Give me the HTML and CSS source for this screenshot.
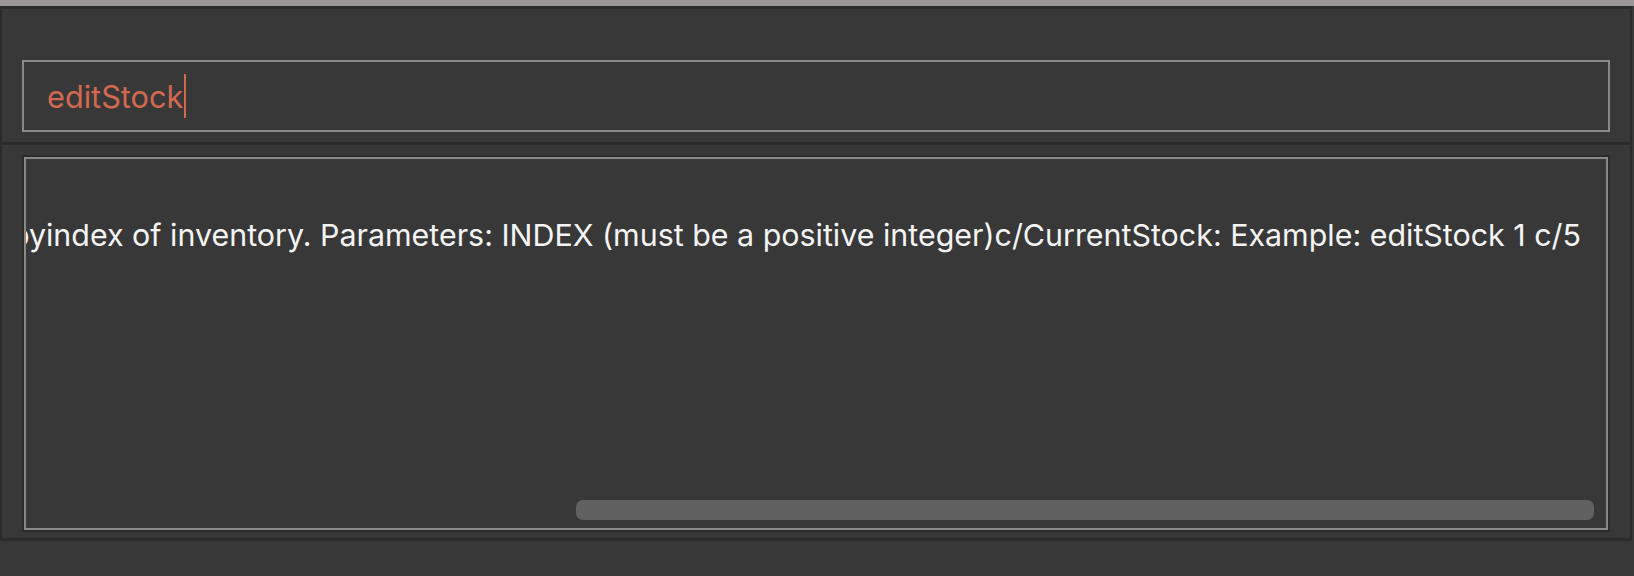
FILE: index.html
```html
<!DOCTYPE html>
<html lang="en">
<head>
<meta charset="utf-8">
<title>editStock</title>
<link rel="stylesheet" href="styles.css">
</head>
<body>
<div class="topbar"></div>
<main class="app">
  <section class="panel cmd-panel">
    <div class="cmd-box">
      <span class="cmd-text">editStock</span><span class="caret"></span>
    </div>
  </section>
  <section class="panel result-panel">
    <div class="result-box">
      <div class="result-inner">
        <div class="result-scroll">
          <span class="result-text">Edits the current stock of the item identified byindex of inventory. Parameters: INDEX (must be a positive integer)c/CurrentStock: Example: editStock 1 c/5</span>
        </div>
        <div class="hscroll-thumb"></div>
      </div>
    </div>
  </section>
</main>
</body>
</html>
```
FILE: styles.css
```css
html, body {
  margin: 0;
  padding: 0;
}
body {
  width: 1634px;
  height: 576px;
  overflow: hidden;
  background: #383838;
  font-family: "Inter", "Noto Sans", sans-serif;
}
.topbar {
  height: 6px;
  background: #9b9697;
}
.app {
  width: 1632px;
  display: flex;
  flex-direction: column;
  border-top: 3px solid #2b2b2b;
}
.panel {
  border-left: 2px solid #2b2b2b;
  border-right: 2px solid #2b2b2b;
  background: #383838;
}
.cmd-panel {
  height: 133px;
  box-sizing: border-box;
  padding: 51px 20px 0 20px;
}
.cmd-box {
  height: 72px;
  box-sizing: border-box;
  border: 2px solid #8a8a8a;
  display: flex;
  align-items: center;
  padding-left: 23px;
}
.cmd-text {
  font-size: 30.7px;
  line-height: 36px;
  color: #d2694f;
  padding-top: 2px;
}
.caret {
  display: inline-block;
  width: 2px;
  height: 44px;
  margin-left: 1px;
  background: #d2694f;
}
.result-panel {
  border-top: 3px solid #2b2b2b;
  border-bottom: 3px solid #2b2b2b;
  height: 399px;
  box-sizing: border-box;
  padding: 10px 20px 9px 20px;
}
.result-box {
  height: 377px;
  box-sizing: border-box;
  border: 2px solid #2b2b2b;
}
.result-inner {
  position: relative;
  height: 100%;
  box-sizing: border-box;
  border: 2px solid #8a8a8a;
}
.result-scroll {
  display: flex;
  justify-content: flex-end;
  overflow: hidden;
  padding: 58px 25px 0 0;
}
.result-text {
  flex: none;
  white-space: nowrap;
  font-size: 30.4px;
  line-height: 36px;
  color: #f4f4f4;
}
.hscroll-thumb {
  position: absolute;
  left: 550px;
  top: 341px;
  width: 1018px;
  height: 20px;
  border-radius: 7px;
  background: #616161;
}
```
